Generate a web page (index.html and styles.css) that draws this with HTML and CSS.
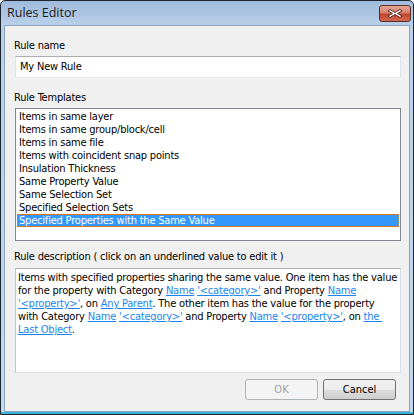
FILE: index.html
```html
<!DOCTYPE html>
<html>
<head>
<meta charset="utf-8">
<link rel="stylesheet" href="styles.css">
</head>
<body>
<div class="window">
  <div class="titlebar">
    <span class="title">Rules Editor</span>
    <span class="close">
      <svg width="18" height="11" viewBox="0 0 18 11"><path d="M4 1.5 L9 4.5 L14 1.5 L16 3 L11.5 5.5 L16 8 L14 9.5 L9 6.5 L4 9.5 L2 8 L6.5 5.5 L2 3 Z" fill="#fff" stroke="#5a2a24" stroke-width="1" stroke-linejoin="round"/></svg>
    </span>
  </div>
  <div class="content">
    <div class="label first">Rule name</div>
    <div class="input">My New Rule</div>
    <div class="label templates">Rule Templates</div>
    <div class="list">
      <div class="item">Items in same layer</div>
      <div class="item">Items in same group/block/cell</div>
      <div class="item">Items in same file</div>
      <div class="item">Items with coincident snap points</div>
      <div class="item">Insulation Thickness</div>
      <div class="item">Same Property Value</div>
      <div class="item">Same Selection Set</div>
      <div class="item">Specified Selection Sets</div>
      <div class="item selected">Specified Properties with the Same Value</div>
    </div>
    <div class="label description">Rule description ( click on an underlined value to edit it )</div>
    <div class="desc">
      <div class="line">Items with specified properties sharing the same value. One item has the value</div>
      <div class="line">for the property with Category <a>Name</a> <a>'&lt;category&gt;'</a> and Property <a>Name</a></div>
      <div class="line"><a>'&lt;property&gt;'</a>, on <a>Any Parent</a>. The other item has the value for the property</div>
      <div class="line">with Category <a>Name</a> <a>'&lt;category&gt;'</a> and Property <a>Name</a> <a>'&lt;property&gt;'</a>, on <a>the&nbsp;</a></div>
      <div class="line"><a>Last Object</a>.</div>
    </div>
    <div class="buttons">
      <span class="btn disabled">OK</span>
      <span class="btn">Cancel</span>
    </div>
  </div>
</div>
</body>
</html>
```
FILE: styles.css
```css
html, body {
  margin: 0;
  padding: 0;
  background: #ffffff;
}
.window {
  box-sizing: border-box;
  width: 414px;
  height: 415px;
  border: 1px solid #1c2630;
  border-radius: 5px 5px 0 0;
  background: linear-gradient(#9fbadb 0px, #b9d0e9 24px, #c3d8ee 100%);
  display: flex;
  flex-direction: column;
  padding: 0 3px 2px 3px;
  font-family: "DejaVu Sans Condensed", "Liberation Sans", sans-serif;
  font-size: 11px;
  letter-spacing: -0.2px;
  color: #000;
  box-shadow: inset 0 -2px 0 #33b6d9;
}
.titlebar {
  height: 24px;
  display: flex;
  align-items: flex-start;
  justify-content: space-between;
}
.title {
  font-family: "Open Sans", "DejaVu Sans", sans-serif;
  font-size: 12.5px;
  letter-spacing: 0;
  margin-left: 3px;
  margin-top: 3px;
  color: #1a1a1a;
}
.close {
  box-sizing: border-box;
  width: 32px;
  height: 17px;
  margin-top: 4px;
  margin-right: -1px;
  border: 1px solid #5d2a22;
  border-radius: 3px;
  background: linear-gradient(#e4a596 0%, #d8806c 45%, #c2452d 55%, #cf6a4f 100%);
  display: flex;
  align-items: center;
  justify-content: center;
}
.content {
  flex: 1;
  background: #f0f0f0;
  border: 1px solid #8ea5bf;
  padding: 0 8px 0 10px;
  display: flex;
  flex-direction: column;
}
.label {
  height: 13px;
  line-height: 13px;
  margin-top: 13px;
  margin-bottom: 4px;
  margin-left: -1px;
  white-space: nowrap;
}
.label.description {
  margin-top: 9px;
  margin-bottom: 5px;
}
.input {
  box-sizing: border-box;
  height: 22px;
  background: #fff;
  border: 1px solid #e2e3ea;
  border-top-color: #abadb3;
  border-bottom-color: #e3e9ef;
  padding: 3px 4px;
  line-height: 14px;
}
.list {
  box-sizing: border-box;
  height: 133px;
  background: #fff;
  border: 1px solid #828790;
  padding: 1px 1px;
}
.item {
  height: 13px;
  line-height: 13px;
  padding-left: 2px;
  white-space: nowrap;
}
.item.selected {
  background: #3399ff;
  color: #fff;
  box-sizing: border-box;
  border: 1px dotted #e0761c;
  padding-left: 1px;
  line-height: 11px;
}
.desc {
  box-sizing: border-box;
  height: 105px;
  background: #fff;
  border: 1px solid #dbdfe6;
  border-top-color: #abadb3;
  border-left-color: #c2c6cc;
  padding: 2px 2px;
}
.line {
  height: 13px;
  line-height: 13px;
  white-space: nowrap;
}
.line a {
  color: #1a85f0;
  text-decoration: underline;
}
.buttons {
  display: flex;
  justify-content: flex-end;
  gap: 5px;
  margin-top: 6px;
  padding-right: 5px;
}
.btn {
  box-sizing: border-box;
  width: 73px;
  height: 21px;
  border: 1px solid #707070;
  border-radius: 3px;
  background: linear-gradient(#f2f2f2 0%, #ebebeb 50%, #dddddd 51%, #cfcfcf 100%);
  display: flex;
  align-items: center;
  justify-content: center;
  color: #000;
  letter-spacing: 0;
}
.btn.disabled {
  border-color: #adb2b5;
  background: #f4f4f4;
  color: #a0a0a0;
}
```
